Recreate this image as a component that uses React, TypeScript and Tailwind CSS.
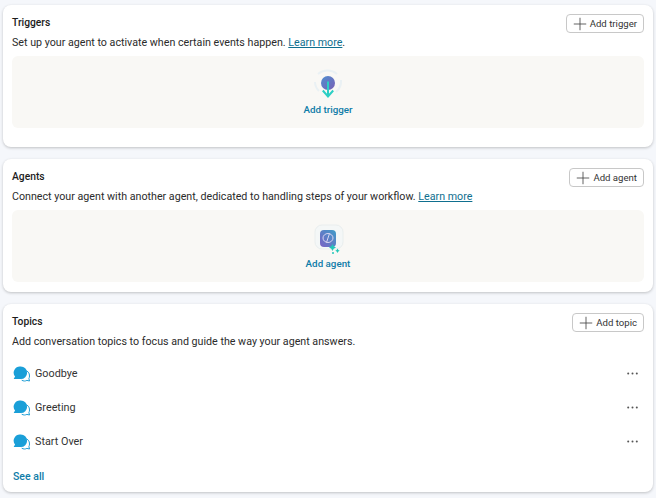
import { Plus } from "lucide-react";

const font = "font-['Roboto',sans-serif]";
const body = "mt-[2px] px-[9px] text-[10.7px] leading-[16px] text-[#2b2b2b]";

const HeaderButton = ({ label }: { label: string }) => (
  <button className="flex h-[19px] items-center gap-[4px] rounded-[4px] border border-[#c8c8c8] bg-white pr-[6px] pl-[7px] text-[9.6px] text-[#333]">
    <Plus className="-mx-[4px] h-[20px] w-[20px] text-[#444]" strokeWidth={1} />
    <span className="pt-[1px]">{label}</span>
  </button>
);

const TriggerIcon = () => (
  <svg width="30" height="32" viewBox="0 0 30 32" fill="none">
    <defs>
      <linearGradient id="trg" x1="0" y1="0" x2="1" y2="1">
        <stop offset="0" stopColor="#4f8fd0" />
        <stop offset="1" stopColor="#7a5fb5" />
      </linearGradient>
    </defs>
    <path d="M5 5a15 15 0 0 1 19 0M28 11a14 14 0 0 1-5 12M2 13a13 13 0 0 0 4 9" stroke="#eaf1f4" strokeWidth="2" />
    <circle cx="15" cy="14" r="7" fill="url(#trg)" />
    <path d="M15 12.500v15" stroke="#2ccfc4" strokeWidth="2" />
    <path d="M9.800 21.500l5.200 6 5.200-6" stroke="#2ccfc4" strokeWidth="2" />
  </svg>
);

const AgentIcon = () => (
  <svg width="32" height="32" viewBox="0 0 32 32" fill="none">
    <defs>
      <linearGradient id="agt" x1="0" y1="1" x2="1" y2="0">
        <stop offset="0" stopColor="#7a62c4" />
        <stop offset="1" stopColor="#3f9cc8" />
      </linearGradient>
    </defs>
    <rect x="3" y="2" width="28" height="24" rx="7" fill="#f4f7f7" stroke="#e9eeee" />
    <rect x="8" y="7" width="16" height="17" rx="4" fill="url(#agt)" />
    <ellipse cx="16" cy="15" rx="5" ry="4.500" stroke="#d9d4f2" strokeWidth="1" />
    <path d="M14.500 19.500l3-9" stroke="#d9d4f2" strokeWidth="1" />
    <path d="M20.500 21l1.200 2.300 2.300 1.200-2.300 1.200-1.200 2.300-1.200-2.300-2.300-1.200 2.300-1.200z" fill="#22c7b8" />
    <path d="M25.500 25.500l.8 1.400 1.400.8-1.400.8-.8 1.400-.8-1.400-1.400-.8 1.400-.8z" fill="#22c7b8" />
    <circle cx="21" cy="30" r="1" fill="#22c7b8" />
  </svg>
);

const TopicIcon = () => (
  <svg width="18" height="16" viewBox="0 0 18 16" fill="none">
    <path d="M12 4.500A5.500 5.500 0 0 1 16.500 10c0 1-.2 1.800-.6 2.500l.6 2.500-2.600-.6c-.8.400-1.700.6-2.400.6-1 0-2-.3-2.800-.8" fill="#fff" stroke="#1f9ed6" strokeWidth="1" />
    <path d="M7.800 .5a6.300 6.300 0 0 1 0 12.600H1.300c-.5 0-.7-.5-.4-.9l1.200-1.500A6.300 6.300 0 0 1 7.800 .5z" fill="#1a9fd8" />
  </svg>
);

const Dots = () => (
  <svg width="11" height="3" viewBox="0 0 11 3" fill="#555" className="-mt-[2px]">
    <circle cx="1.200" cy="1.500" r="1" />
    <circle cx="5.500" cy="1.500" r="1" />
    <circle cx="9.800" cy="1.500" r="1" />
  </svg>
);

const EmptyBox = ({ icon, label }: { icon: React.ReactNode; label: string }) => (
  <div className="mx-[9px] mt-[5px] flex h-[72px] flex-col items-center rounded-[6px] bg-[#f9f8f5] pt-[13px]">
    {icon}
    <span className="mt-[1px] text-[9.800px] leading-[16px] font-medium text-[#0f7ca8]">{label}</span>
  </div>
);

const Card = ({ className, title, action, children }: { className: string; title: string; action: string; children: React.ReactNode }) => (
  <section className={`mx-[3px] rounded-[8px] bg-white pt-[9px] shadow-[0_1px_3px_rgba(0,0,0,0.22)] ${className}`}>
    <div className="flex items-start justify-between px-[9px]">
      <h2 className="mt-[1px] text-[10.3px] leading-[16px] font-medium text-[#1c1c1c]">{title}</h2>
      <HeaderButton label={action} />
    </div>
    {children}
  </section>
);

export default function App() {
  const topics = ["Goodbye", "Greeting", "Start Over"];
  return (
    <div className={`flex h-[498px] w-[656px] flex-col overflow-hidden bg-[#f5f7fb] pt-[5px] ${font}`}>
      <Card className="h-[142px]" title="Triggers" action="Add trigger">
        <p className={body}>
          Set up your agent to activate when certain events happen. <a className="text-[#0f6f8f] underline">Learn more</a>.
        </p>
        <EmptyBox label="Add trigger" icon={<TriggerIcon />} />
      </Card>

      <Card className="mt-[12px] h-[133px]" title="Agents" action="Add agent">
        <p className={body}>
          Connect your agent with another agent, dedicated to handling steps of your workflow. <a className="text-[#0f6f8f] underline">Learn more</a>
        </p>
        <EmptyBox label="Add agent" icon={<AgentIcon />} />
      </Card>

      <Card className="mt-[12px] h-[188px]" title="Topics" action="Add topic">
        <p className={body}>Add conversation topics to focus and guide the way your agent answers.</p>
        <div className="mt-[7px] flex flex-col">
          {topics.map((t) => (
            <div key={t} className="flex h-[34px] items-center pr-[15px] pl-[10px]">
              <TopicIcon />
              <span className="ml-[4px] flex-1 text-[10.8px] text-[#333]">{t}</span>
              <Dots />
            </div>
          ))}
        </div>
        <a className="mt-[10px] block px-[10px] text-[10.5px] leading-[16px] font-medium text-[#0f7ca8]">See all</a>
      </Card>
    </div>
  );
}
